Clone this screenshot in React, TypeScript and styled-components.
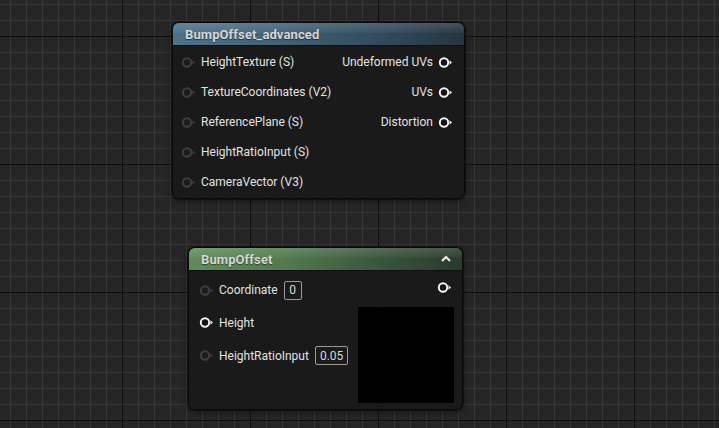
import styled, { createGlobalStyle } from "styled-components";

const GlobalStyle = createGlobalStyle`
  html, body {
    margin: 0;
    padding: 0;
    width: 100%;
    height: 100%;
    overflow: hidden;
  }
  body {
    font-family: Roboto, "Liberation Sans", sans-serif;
  }
`;

const Canvas = styled.div`
  position: relative;
  width: 719px;
  height: 428px;
  background-color: #262626;
  background-image:
    linear-gradient(to right, #101010 1px, transparent 1px),
    linear-gradient(to bottom, #101010 1px, transparent 1px),
    linear-gradient(to right, #363636 1px, transparent 1px),
    linear-gradient(to bottom, #363636 1px, transparent 1px);
  background-size: 128px 128px, 128px 128px, 16px 16px, 16px 16px;
  background-position: 122px 0, 0 36px, 10px 0, 0 4px;
  overflow: hidden;
`;

const Node = styled.div<{ $x: number; $y: number; $w: number }>`
  position: absolute;
  left: ${(p) => p.$x}px;
  top: ${(p) => p.$y}px;
  width: ${(p) => p.$w}px;
  background: rgba(24, 25, 24, 0.95);
  border: 1px solid #0a0a0a;
  border-radius: 7px;
  box-shadow: 0 0 0 1px rgba(0, 0, 0, 0.35), 0 2px 6px rgba(0, 0, 0, 0.5);
  overflow: hidden;
  display: flex;
  flex-direction: column;
`;

const Header = styled.div<{ $tone: "blue" | "green" }>`
  position: relative;
  height: 22px;
  display: flex;
  align-items: center;
  justify-content: space-between;
  padding: 0 10px 0 12px;
  border-bottom: 1px solid #101010;
  background: ${(p) =>
    p.$tone === "blue"
      ? "linear-gradient(to right, #4d738c 0%, #426378 35%, #30495a 75%, #26343e 100%)"
      : "linear-gradient(to right, #5f8c5a 0%, #527a4e 35%, #36503a 75%, #2a3a2c 100%)"};
  &::after {
    content: "";
    position: absolute;
    left: 0;
    right: 0;
    top: 0;
    height: 45%;
    background: linear-gradient(to bottom, rgba(255, 255, 255, 0.14), rgba(255, 255, 255, 0.03));
    pointer-events: none;
  }
`;

const Title = styled.span`
  position: relative;
  z-index: 1;
  color: #d6d6d6;
  font-size: 13px;
  font-weight: bold;
  letter-spacing: 0.1px;
  text-shadow: 0 1px 1px rgba(0, 0, 0, 0.5);
`;

const Body = styled.div<{ $pad: string }>`
  display: flex;
  justify-content: space-between;
  padding: ${(p) => p.$pad};
`;

const Column = styled.div<{ $align: "start" | "end" }>`
  display: flex;
  flex-direction: column;
  align-items: ${(p) => (p.$align === "start" ? "flex-start" : "flex-end")};
`;

const Row = styled.div<{ $h: number; $reverse?: boolean }>`
  height: ${(p) => p.$h}px;
  display: flex;
  align-items: center;
  gap: 5px;
  flex-direction: ${(p) => (p.$reverse ? "row-reverse" : "row")};
  color: #e2e2e2;
  font-size: 12px;
  white-space: nowrap;
`;

const ValueBox = styled.span`
  display: inline-flex;
  align-items: center;
  justify-content: center;
  height: 17px;
  min-width: 8px;
  padding: 0 4px;
  margin-left: 1px;
  border: 1px solid #9a9a9a;
  border-radius: 2px;
  color: #d8d8d8;
  font-size: 12px;
`;

const Preview = styled.div`
  width: 96px;
  height: 96px;
  background: #000;
  margin-top: 7px;
`;

const OutPin = styled.span`
  display: flex;
  margin-right: 2px;
`;

const Chevron = styled.svg`
  position: relative;
  z-index: 1;
`;

function Pin({ lit }: { lit?: boolean }) {
  const c = lit ? "#f2f2f2" : "#3e3e3e";
  return (
    <svg width="15" height="13" viewBox="0 0 15 13">
      <circle cx="6" cy="6.5" r="4.2" fill={lit ? "#151515" : "#1c1c1c"} stroke={c} strokeWidth="2" />
      <path d="M11.5 4.3 L14 6.5 L11.5 8.7 Z" fill={c} />
    </svg>
  );
}

const advancedInputs = [
  "HeightTexture (S)",
  "TextureCoordinates (V2)",
  "ReferencePlane (S)",
  "HeightRatioInput (S)",
  "CameraVector (V3)",
];

const advancedOutputs = ["Undeformed UVs", "UVs", "Distortion"];

export default function App() {
  return (
    <>
      <GlobalStyle />
      <Canvas>
        <Node $x={172} $y={22} $w={291}>
          <Header $tone="blue">
            <Title>BumpOffset_advanced</Title>
          </Header>
          <Body $pad="1px 11px 1px 8px">
            <Column $align="start">
              {advancedInputs.map((name) => (
                <Row key={name} $h={30}>
                  <Pin />
                  {name}
                </Row>
              ))}
            </Column>
            <Column $align="end">
              {advancedOutputs.map((name) => (
                <Row key={name} $h={30} $reverse>
                  <Pin lit />
                  {name}
                </Row>
              ))}
            </Column>
          </Body>
        </Node>

        <Node $x={188} $y={247} $w={273}>
          <Header $tone="green">
            <Title>BumpOffset</Title>
            <Chevron width="12" height="8" viewBox="0 0 12 8">
              <path d="M2 6 L6 2 L10 6" fill="none" stroke="#f0f0f0" strokeWidth="2" />
            </Chevron>
          </Header>
          <Body $pad="3px 8px 6px 10px">
            <Column $align="start">
              <Row $h={32}>
                <Pin />
                Coordinate
                <ValueBox>0</ValueBox>
              </Row>
              <Row $h={33}>
                <Pin lit />
                Height
              </Row>
              <Row $h={33}>
                <Pin />
                HeightRatioInput
                <ValueBox>0.05</ValueBox>
              </Row>
            </Column>
            <Column $align="end">
              <Row $h={26}>
                <OutPin>
                  <Pin lit />
                </OutPin>
              </Row>
              <Preview />
            </Column>
          </Body>
        </Node>
      </Canvas>
    </>
  );
}
